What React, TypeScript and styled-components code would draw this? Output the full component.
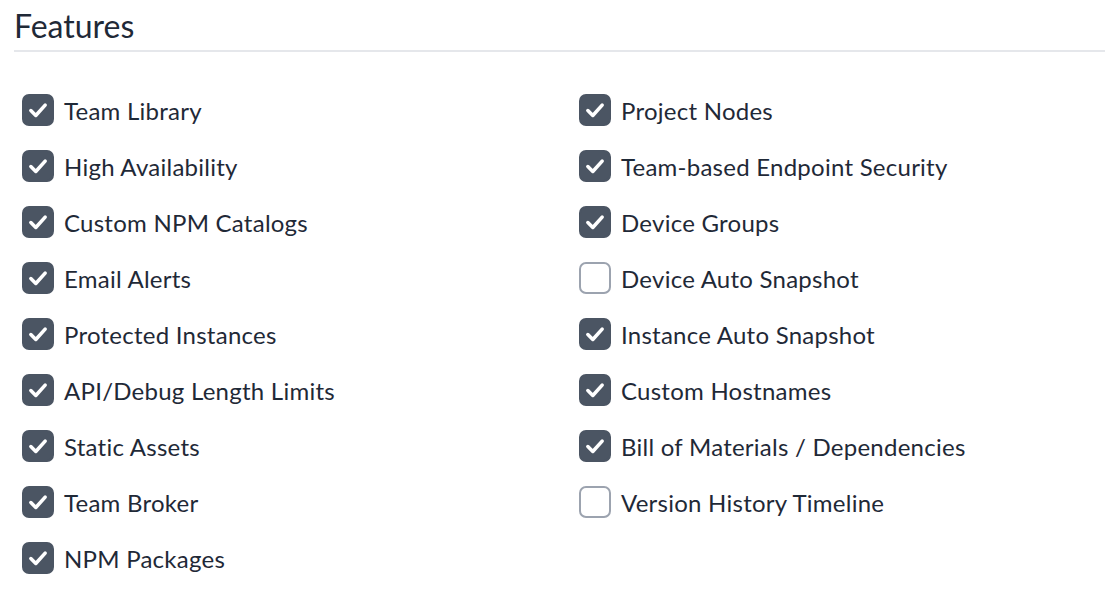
import React from "react";
import styled, { createGlobalStyle } from "styled-components";

const Global = createGlobalStyle`
  html, body { margin: 0; padding: 0; background: #ffffff; }
  body { font-family: Lato, "Noto Sans", sans-serif; color: #1f2937; }
`;

const Page = styled.div`
  padding: 0 0 0 14px;
  width: 1091px;
`;

const Heading = styled.h2`
  margin: 0;
  padding-top: 8px;
  font-size: 32px;
  font-weight: 400;
  line-height: 36px;
  color: #1f2937;
  padding-bottom: 6px;
  border-bottom: 2px solid #e5e7eb;
`;

const Grid = styled.div`
  display: grid;
  grid-template-columns: 557px 1fr;
  grid-auto-flow: column;
  grid-template-rows: repeat(9, 56px);
  padding: 30px 0 0 8px;
`;

const Row = styled.label`
  display: flex;
  align-items: center;
  gap: 10px;
  font-size: 24px;
  letter-spacing: 0.25px;
  color: #1f2937;
  height: 56px;
`;

const Box = styled.span<{ $checked: boolean }>`
  box-sizing: border-box;
  width: 32px;
  height: 32px;
  border-radius: 7px;
  display: flex;
  align-items: center;
  justify-content: center;
  flex-shrink: 0;
  background: ${(p) => (p.$checked ? "#4b5563" : "#ffffff")};
  border: 2px solid ${(p) => (p.$checked ? "#4b5563" : "#9ca3af")};
`;

const Check = () => (
  <svg width="22" height="22" viewBox="0 0 20 20" fill="none">
    <path d="M3.5 10.5 L8 15 L16.5 5.5" stroke="#ffffff" strokeWidth="3.2" strokeLinecap="round" strokeLinejoin="round" />
  </svg>
);

const left: [string, boolean][] = [
  ["Team Library", true],
  ["High Availability", true],
  ["Custom NPM Catalogs", true],
  ["Email Alerts", true],
  ["Protected Instances", true],
  ["API/Debug Length Limits", true],
  ["Static Assets", true],
  ["Team Broker", true],
  ["NPM Packages", true],
];

const right: [string, boolean][] = [
  ["Project Nodes", true],
  ["Team-based Endpoint Security", true],
  ["Device Groups", true],
  ["Device Auto Snapshot", false],
  ["Instance Auto Snapshot", true],
  ["Custom Hostnames", true],
  ["Bill of Materials / Dependencies", true],
  ["Version History Timeline", false],
];

const Item = ({ label, checked }: { label: string; checked: boolean }) => (
  <Row>
    <Box $checked={checked}>{checked && <Check />}</Box>
    <span>{label}</span>
  </Row>
);

export default function App() {
  return (
    <Page>
      <Global />
      <Heading>Features</Heading>
      <Grid>
        {left.map(([l, c]) => (
          <Item key={l} label={l} checked={c} />
        ))}
        {right.map(([l, c]) => (
          <Item key={l} label={l} checked={c} />
        ))}
      </Grid>
    </Page>
  );
}
